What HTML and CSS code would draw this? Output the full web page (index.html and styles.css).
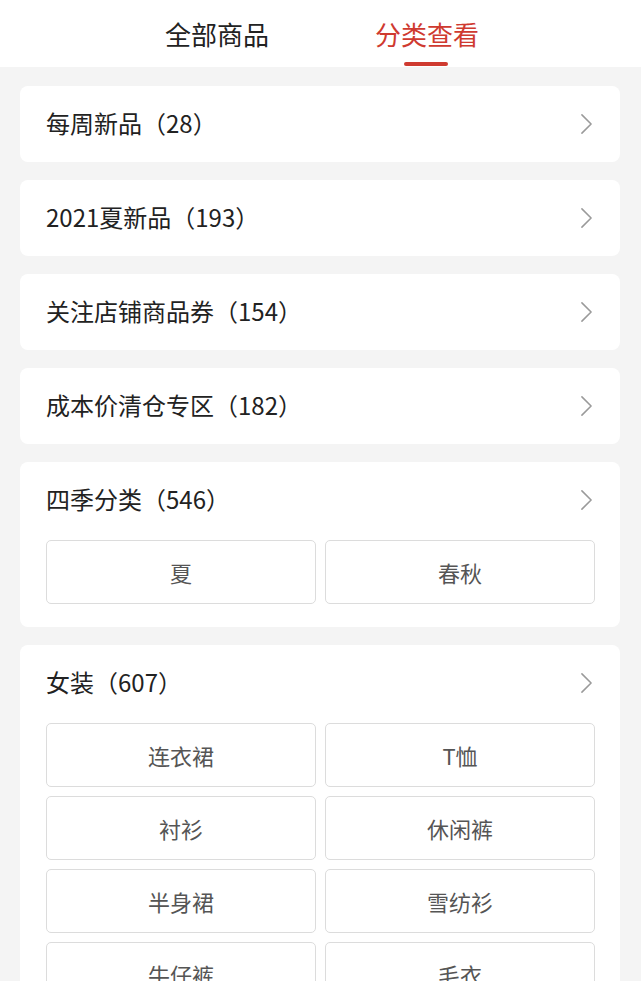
FILE: index.html
```html
<!DOCTYPE html>
<html lang="zh-CN">
<head>
  <meta charset="UTF-8" />
  <meta name="viewport" content="width=device-width, initial-scale=1.0"/>
  <title>分类查看</title>
  <link rel="stylesheet" href="styles.css">
</head>
<body>
  <div class="tabs">
    <div class="tab">全部商品</div>
    <div class="tab active">分类查看</div>
  </div>

  <div class="list">
    <div class="card">
      <div class="head">
        <span class="title">每周新品（28）</span>
        <svg class="arrow" viewBox="0 0 14 24"><path d="M2 2 L12 12 L2 22"/></svg>
      </div>
    </div>

    <div class="card">
      <div class="head">
        <span class="title">2021夏新品（193）</span>
        <svg class="arrow" viewBox="0 0 14 24"><path d="M2 2 L12 12 L2 22"/></svg>
      </div>
    </div>

    <div class="card">
      <div class="head">
        <span class="title">关注店铺商品券（154）</span>
        <svg class="arrow" viewBox="0 0 14 24"><path d="M2 2 L12 12 L2 22"/></svg>
      </div>
    </div>

    <div class="card">
      <div class="head">
        <span class="title">成本价清仓专区（182）</span>
        <svg class="arrow" viewBox="0 0 14 24"><path d="M2 2 L12 12 L2 22"/></svg>
      </div>
    </div>

    <div class="card">
      <div class="head">
        <span class="title">四季分类（546）</span>
        <svg class="arrow" viewBox="0 0 14 24"><path d="M2 2 L12 12 L2 22"/></svg>
      </div>
      <div class="tags">
        <div class="tag">夏</div>
        <div class="tag">春秋</div>
      </div>
    </div>

    <div class="card">
      <div class="head">
        <span class="title">女装（607）</span>
        <svg class="arrow" viewBox="0 0 14 24"><path d="M2 2 L12 12 L2 22"/></svg>
      </div>
      <div class="tags">
        <div class="tag">连衣裙</div>
        <div class="tag">T恤</div>
        <div class="tag">衬衫</div>
        <div class="tag">休闲裤</div>
        <div class="tag">半身裙</div>
        <div class="tag">雪纺衫</div>
        <div class="tag">牛仔裤</div>
        <div class="tag">毛衣</div>
      </div>
    </div>
  </div>
</body>
</html>
```

FILE: styles.css
```css
body {
  margin: 0;
  font-family: "Noto Sans CJK SC", "Noto Sans", sans-serif;
  background: #f4f4f4;
  height: 100vh;
  overflow: hidden;
}

.tabs {
  display: flex;
  justify-content: center;
  gap: 106px;
  height: 67px;
  background: #fff;
  padding-left: 3px;
}

.tab {
  position: relative;
  font-size: 26px;
  line-height: 67px;
  color: #222;
  padding-bottom: 2px;
}

.tab.active {
  color: #cf3a30;
}

.tab.active::after {
  content: "";
  position: absolute;
  left: 50%;
  bottom: 1px;
  width: 44px;
  height: 4px;
  margin-left: -23px;
  border-radius: 2px;
  background: #cf3a30;
}

.list {
  display: flex;
  flex-direction: column;
  gap: 18px;
  padding: 19px 21px 0 20px;
}

.card {
  background: #fff;
  border-radius: 8px;
  padding: 0 25px 0 26px;
}

.head {
  display: flex;
  align-items: center;
  justify-content: space-between;
  height: 76px;
}

.title {
  font-size: 24px;
  line-height: 30px;
  color: #222;
  margin-top: -3px;
}

.arrow {
  width: 13px;
  height: 22px;
  margin-right: 2px;
  fill: none;
  stroke: #9a9a9a;
  stroke-width: 1.7;
  stroke-linecap: round;
  stroke-linejoin: round;
}

.tags {
  display: grid;
  grid-template-columns: 1fr 1fr;
  gap: 9px;
  margin-top: 2px;
  padding-bottom: 23px;
}

.tag {
  height: 62px;
  border: 1px solid #dcdcdc;
  border-radius: 5px;
  display: flex;
  align-items: center;
  justify-content: center;
  font-size: 22px;
  color: #555;
}
```
